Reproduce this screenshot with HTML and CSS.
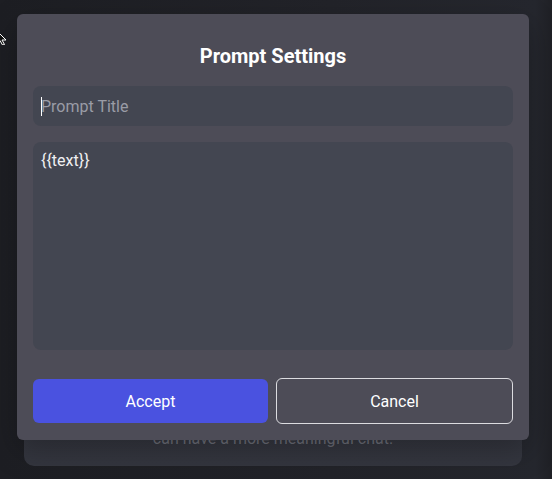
FILE: index.html
```html
<!DOCTYPE html>
<html lang="en">
<head>
<meta charset="utf-8">
<title>Prompt Settings</title>
<link rel="stylesheet" href="styles.css">
</head>
<body>
<div class="page">
  <div class="back-card">
    <p class="back-text">can have a more meaningful chat.</p>
  </div>

  <div class="modal">
    <h2 class="modal-title">Prompt Settings</h2>
    <div class="field">
      <span class="caret"></span>
      <input class="input" type="text" placeholder="Prompt Title">
    </div>
    <textarea class="textarea">{{text}}</textarea>
    <div class="actions">
      <button class="btn btn-accept">Accept</button>
      <button class="btn btn-cancel">Cancel</button>
    </div>
  </div>

  <svg class="pointer" width="10" height="16" viewBox="0 0 10 16">
    <path d="M-4 1 L6 11 L2 11 L4.5 15.5 L2.5 16 L0 11.5 L-4 14 Z" fill="#111" stroke="#fff" stroke-width="1"/>
  </svg>
</div>
</body>
</html>
```
FILE: styles.css
```css
* { box-sizing: border-box; }
html, body { margin: 0; padding: 0; }
body {
  background: #1e1f24;
  font-family: Roboto, "Liberation Sans", sans-serif;
}
.page {
  position: relative;
  width: 552px;
  height: 479px;
  overflow: hidden;
  background: linear-gradient(90deg, #1d1e23 0%, #222329 60%, #25272e 97%, #1f2025 100%);
  padding-top: 40px;
}
.back-card {
  margin-left: 24px;
  width: 498px;
  height: 426px;
  border-radius: 10px;
  background: linear-gradient(180deg, #2c2e36 0%, #34363f 100%);
  display: flex;
  flex-direction: column;
  justify-content: flex-end;
  padding-bottom: 15px;
}
.back-text {
  margin: 0;
  text-align: center;
  color: #6b6d77;
  font-size: 16px;
  line-height: 24px;
}
.modal {
  position: absolute;
  left: 17px;
  top: 14px;
  width: 512px;
  height: 426px;
  background: #4d4c57;
  border-radius: 6px;
  padding: 28px 16px 16px;
  display: flex;
  flex-direction: column;
  box-shadow: 0 10px 30px rgba(0,0,0,0.25);
}
.modal-title {
  margin: 0 0 16px;
  text-align: center;
  color: #ffffff;
  font-size: 20px;
  line-height: 28px;
  font-weight: 700;
}
.field {
  position: relative;
}
.caret {
  position: absolute;
  left: 8px;
  top: 11px;
  width: 1px;
  height: 19px;
  background: #ffffff;
}
.input {
  display: block;
  width: 100%;
  height: 40px;
  border: none;
  outline: none;
  border-radius: 8px;
  background: #434651;
  padding: 0 8px;
  font-family: inherit;
  font-size: 16px;
  color: #ffffff;
  caret-color: transparent;
}
.input::placeholder { color: #9a9ca6; opacity: 1; }
.textarea {
  display: block;
  width: 100%;
  height: 208px;
  margin-top: 16px;
  border: none;
  outline: none;
  resize: none;
  border-radius: 8px;
  background: #434651;
  padding: 7px 8px;
  font-family: inherit;
  font-size: 16px;
  line-height: 24px;
  color: #f0f0f2;
}
.actions {
  margin-top: 28px;
  display: flex;
  gap: 8px;
  align-items: center;
}
.btn {
  font-family: inherit;
  font-size: 16px;
  color: #ffffff;
  border-radius: 6px;
  cursor: pointer;
}
.btn-accept {
  width: 235px;
  flex: none;
  height: 44px;
  border: none;
  background: #4a52e0;
}
.btn-cancel {
  flex: 1;
  height: 46px;
  background: transparent;
  border: 1px solid #dcdce0;
}
.pointer {
  position: absolute;
  left: 0;
  top: 29px;
}
```
